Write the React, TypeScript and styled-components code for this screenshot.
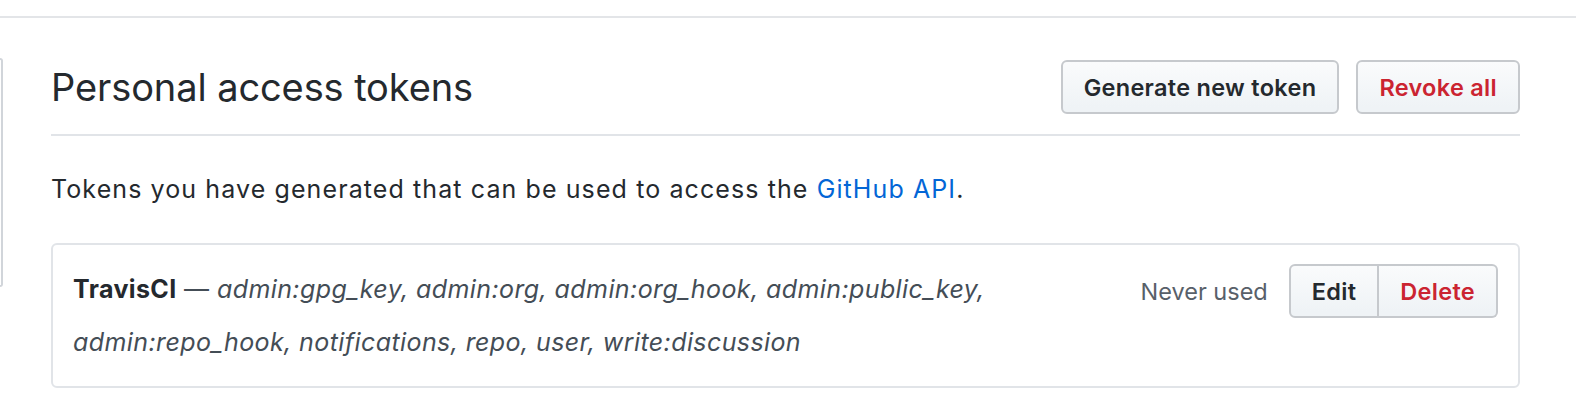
import styled, { createGlobalStyle } from "styled-components";

const GlobalStyle = createGlobalStyle`
  body {
    margin: 0;
    background: #fff;
    font-family: Inter, "Noto Sans", "Liberation Sans", sans-serif;
    color: #24292e;
  }
`;

const TopRule = styled.div`
  margin-top: 16px;
  border-top: 2px solid #e3e5e8;
`;

const Layout = styled.div`
  display: flex;
  align-items: flex-start;
`;

const SideNav = styled.nav`
  width: 1px;
  height: 225px;
  margin-top: 40px;
  border: 2px solid #d1d5da;
  border-left: 0;
  border-radius: 0 6px 6px 0;
`;

const Main = styled.main`
  margin-left: 48px;
  width: 1469px;
  padding-top: 42px;
`;

const Subhead = styled.div`
  display: flex;
  align-items: center;
  padding-bottom: 20px;
  border-bottom: 2px solid #e1e4e8;
`;

const Heading = styled.h2`
  flex: 1;
  margin: 0;
  font-size: 38px;
  font-weight: 400;
  letter-spacing: -0.1px;
`;

const Actions = styled.div`
  display: flex;
  gap: 17px;
`;

const Button = styled.button<{ $danger?: boolean }>`
  height: 54px;
  padding: 0 21px;
  font-family: inherit;
  font-size: 23.5px;
  font-weight: 600;
  letter-spacing: 0.3px;
  color: ${(p) => (p.$danger ? "#cb2431" : "#24292e")};
  background: linear-gradient(#fafbfc, #eff3f6 90%);
  border: 2px solid #c6c9cd;
  border-radius: 6px;
  cursor: pointer;
`;

const Description = styled.p`
  margin: 36px 0 37px;
  font-size: 25px;
  letter-spacing: 1.1px;
  line-height: 34px;

  a {
    color: #0366d6;
    text-decoration: none;
  }
`;

const TokenBox = styled.div`
  display: flex;
  align-items: flex-start;
  padding: 18px 20px 17px;
  border: 2px solid #e1e4e8;
  border-radius: 6px;
`;

const TokenText = styled.div`
  flex: 1;
  font-size: 25px;
  letter-spacing: 0.4px;
  line-height: 53px;
  color: #444d56;

  strong {
    color: #24292e;
    font-weight: 700;
  }

  em {
    font-style: italic;
  }
`;

const TokenMeta = styled.div`
  display: flex;
  align-items: center;
  gap: 21px;
  padding-top: 1px;
  margin-left: 24px;
`;

const LastUsed = styled.span`
  font-size: 23.5px;
  color: #586069;
`;

const ButtonGroup = styled.div`
  display: flex;

  button:first-child {
    border-radius: 6px 0 0 6px;
  }
  button:last-child {
    border-radius: 0 6px 6px 0;
    border-left: 0;
  }
`;

const token = {
  name: "TravisCI",
  scopes: [
    "admin:gpg_key",
    "admin:org",
    "admin:org_hook",
    "admin:public_key",
    "admin:repo_hook",
    "notifications",
    "repo",
    "user",
    "write:discussion",
  ],
};

export default function App() {
  return (
    <>
      <GlobalStyle />
      <TopRule />
      <Layout>
        <SideNav />
        <Main>
          <Subhead>
            <Heading>Personal access tokens</Heading>
            <Actions>
              <Button>Generate new token</Button>
              <Button $danger>Revoke all</Button>
            </Actions>
          </Subhead>
          <Description>
            Tokens you have generated that can be used to access the{" "}
            <a href="#">GitHub API</a>.
          </Description>
          <TokenBox>
            <TokenText>
              <strong>{token.name}</strong> — <em>{token.scopes.join(", ")}</em>
            </TokenText>
            <TokenMeta>
              <LastUsed>Never used</LastUsed>
              <ButtonGroup>
                <Button>Edit</Button>
                <Button $danger>Delete</Button>
              </ButtonGroup>
            </TokenMeta>
          </TokenBox>
        </Main>
      </Layout>
    </>
  );
}
